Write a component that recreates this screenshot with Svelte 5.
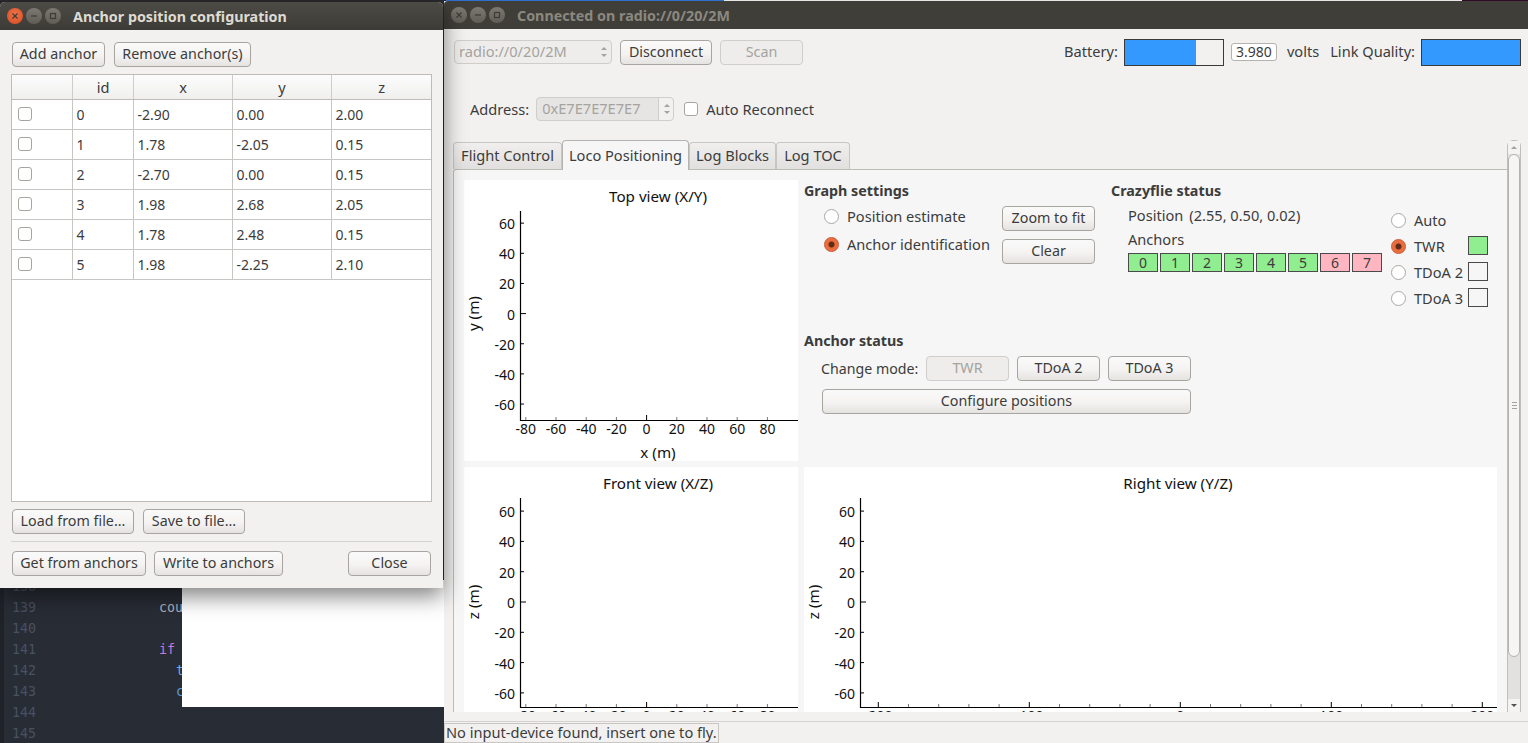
<script>
	const anchors = [
		{ id: 0, x: '-2.90', y: '0.00', z: '2.00' },
		{ id: 1, x: '1.78', y: '-2.05', z: '0.15' },
		{ id: 2, x: '-2.70', y: '0.00', z: '0.15' },
		{ id: 3, x: '1.98', y: '2.68', z: '2.05' },
		{ id: 4, x: '1.78', y: '2.48', z: '0.15' },
		{ id: 5, x: '1.98', y: '-2.25', z: '2.10' }
	];
	const anchorStates = [1, 1, 1, 1, 1, 1, 0, 0];
	const lineNumbers = [138, 139, 140, 141, 142, 143, 144, 145];
	const yValues = [60, 40, 20, 0, -20, -40, -60];
	const xValues = [-80, -60, -40, -20, 0, 20, 40, 60, 80];
	const wideMinor = [];
	for (let v = -200; v <= 200; v += 20) wideMinor.push(v);
</script>

{#snippet plot(title, xLabel, yLabel, width, height, y0, yStep, x0, xStep, xTicks, labelled, titleX)}
	<svg class="plot" viewBox="0 0 {width} {height}" preserveAspectRatio="xMinYMin">
		<text class="label" x={titleX} y="22" text-anchor="middle">{title}</text>
		<line class="axis" x1="56.5" y1="31" x2="56.5" y2="241" />
		<line class="axis" x1="56" y1="240.5" x2={width} y2="240.5" />
		{#each yValues as v}
			<line class="axis thin" x1="57" x2={v === 0 ? 62 : 60} y1={y0 - v * yStep} y2={y0 - v * yStep} />
			<text class="tick" x="51" y={y0 - v * yStep + 6} text-anchor="end">{v}</text>
		{/each}
		{#each xTicks as v}
			<line class="axis thin" class:minor={!labelled.includes(v) || (labelled.length === 9 && v !== 0)} x1={x0 + v * xStep} x2={x0 + v * xStep} y1="240" y2={labelled.includes(v) && (v === 0 || labelled.length < 9) ? 235 : 237} />
		{/each}
		{#each labelled as v}
			<text class="tick" x={x0 + v * xStep} y="254" text-anchor="middle">{v}</text>
		{/each}
		{#if xLabel}
			<text class="label" x={titleX} y="278" text-anchor="middle">{xLabel}</text>
		{/if}
		<text class="label" transform="translate(15 {y0}) rotate(-90)" text-anchor="middle">{yLabel}</text>
	</svg>
{/snippet}

<div class="desktop">
	<div class="top-strip">
		<span class="strip-dark"></span>
		<span class="strip-blue"></span>
		<span class="strip-light"></span>
		<span class="strip-plum"></span>
	</div>

	<div class="editor">
		{#each lineNumbers as n}
			<div class="code-line"><span class="num">{n}</span></div>
		{/each}
		<span class="code code-a">cou</span>
		<span class="code code-b">if</span>
		<span class="code code-c">t</span>
		<span class="code code-d">c</span>
	</div>
	<div class="white-sheet"></div>

	<section class="window main-window">
		<header class="titlebar inactive">
			<div class="controls">
				<span class="dot"><svg width="8" height="8" viewBox="0 0 8 8"><path d="M1.5 1.5l5 5M6.5 1.5l-5 5" /></svg></span>
				<span class="dot"><svg width="8" height="8" viewBox="0 0 8 8"><path d="M1 4h6" /></svg></span>
				<span class="dot"><svg width="8" height="8" viewBox="0 0 8 8"><rect x="1.5" y="1.5" width="5" height="5" /></svg></span>
			</div>
			<h1>Connected on radio://0/20/2M</h1>
		</header>

		<div class="main-body">
			<div class="connect-row">
				<div class="combo">radio://0/20/2M<span class="spin-arrows"><i class="up"></i><i class="down"></i></span></div>
				<button class="w92">Disconnect</button>
				<button class="w83" disabled>Scan</button>
				<div class="grow"></div>
				<span class="battery-label">Battery:</span>
				<div class="bar"><div class="bar-fill" style="width: 73%"></div></div>
				<span class="volt-box">3.980</span>
				<span class="volts">volts</span>
				<span class="link-label">Link Quality:</span>
				<div class="bar"><div class="bar-fill" style="width: 100%"></div></div>
			</div>

			<div class="address-row">
				<span>Address:</span>
				<div class="address-box">
					<span class="address-value">0xE7E7E7E7E7</span>
					<span class="address-spin"><i class="up"></i><i class="down"></i></span>
				</div>
				<input type="checkbox" class="check" />
				<span>Auto Reconnect</span>
			</div>

			<div class="tabs">
				<div class="tab t1">Flight Control</div>
				<div class="tab t2 active">Loco Positioning</div>
				<div class="tab t3">Log Blocks</div>
				<div class="tab t4">Log TOC</div>
			</div>

			<div class="scroll-area">
				<div class="pane">
					<div class="pane-grid">
						<div class="plot-cell">
							{@render plot('Top view (X/Y)', 'x (m)', 'y (m)', 334, 281, 133.6, 1.5075, 182.6, 1.51, xValues, xValues, 194)}
						</div>

						<div class="controls-cell">
							<div class="settings-top">
								<div class="graph-settings">
									<h2>Graph settings</h2>
									<div class="settings-grid">
										<div class="radios">
											<label class="radio-row"><input type="radio" name="graph" class="radio" />Position estimate</label>
											<label class="radio-row"><input type="radio" name="graph" class="radio" checked />Anchor identification</label>
										</div>
										<div class="graph-buttons">
											<button class="w93">Zoom to fit</button>
											<button class="w93">Clear</button>
										</div>
									</div>
								</div>

								<div class="status">
									<h2>Crazyflie status</h2>
									<div class="status-body">
										<div class="status-left">
											<div class="position"><span>Position</span><span>(2.55, 0.50, 0.02)</span></div>
											<div class="anchors-label">Anchors</div>
											<div class="anchor-boxes">
												{#each anchorStates as ok, i}
													<span class="anchor-box" class:ok class:bad={!ok}>{i}</span>
												{/each}
											</div>
										</div>
										<div class="modes">
											<label class="mode"><input type="radio" name="mode" class="radio" /><span class="mode-name">Auto</span></label>
											<label class="mode"><input type="radio" name="mode" class="radio" checked /><span class="mode-name">TWR</span><span class="mode-led ok"></span></label>
											<label class="mode"><input type="radio" name="mode" class="radio" /><span class="mode-name">TDoA 2</span><span class="mode-led"></span></label>
											<label class="mode"><input type="radio" name="mode" class="radio" /><span class="mode-name">TDoA 3</span><span class="mode-led"></span></label>
										</div>
									</div>
								</div>
							</div>

							<div class="anchor-status">
								<h2>Anchor status</h2>
								<div class="change-mode">
									<span class="change-label">Change mode:</span>
									<button class="w83" disabled>TWR</button>
									<button class="w83">TDoA 2</button>
									<button class="w83">TDoA 3</button>
								</div>
								<button class="configure">Configure positions</button>
							</div>
						</div>

						<div class="plot-cell">
							{@render plot('Front view (X/Z)', '', 'z (m)', 334, 245, 135, 1.515, 182.6, 1.51, xValues, xValues, 194)}
						</div>
						<div class="plot-cell">
							{@render plot('Right view (Y/Z)', '', 'z (m)', 693, 245, 135, 1.515, 376.3, 1.51, wideMinor, [-200, -100, 0, 100, 200], 374)}
						</div>
					</div>
				</div>

				<div class="scrollbar">
					<div class="sb-arrow"><i class="up"></i></div>
					<div class="sb-slider"><span class="grip"></span></div>
					<div class="sb-trough"></div>
					<div class="sb-arrow"><i class="down dark"></i></div>
				</div>
			</div>

			<div class="grow"></div>
			<footer class="statusbar">
				<span class="status-msg">No input-device found, insert one to fly.</span>
			</footer>
		</div>
	</section>

	<section class="window dialog">
		<header class="titlebar">
			<div class="controls">
				<span class="dot close"><svg width="8" height="8" viewBox="0 0 8 8"><path d="M1.5 1.5l5 5M6.5 1.5l-5 5" /></svg></span>
				<span class="dot"><svg width="8" height="8" viewBox="0 0 8 8"><path d="M1 4h6" /></svg></span>
				<span class="dot"><svg width="8" height="8" viewBox="0 0 8 8"><rect x="1.5" y="1.5" width="5" height="5" /></svg></span>
			</div>
			<h1>Anchor position configuration</h1>
		</header>

		<div class="dialog-body">
			<div class="btn-row">
				<button class="add">Add anchor</button>
				<button class="remove">Remove anchor(s)</button>
			</div>

			<div class="table-wrap">
				<table>
					<colgroup>
						<col class="col-check" />
						<col class="col-id" />
						<col class="col-num" />
						<col class="col-num" />
						<col />
					</colgroup>
					<thead>
						<tr><th></th><th>id</th><th>x</th><th>y</th><th>z</th></tr>
					</thead>
					<tbody>
						{#each anchors as a}
							<tr>
								<td class="check-cell"><input type="checkbox" class="check" /></td>
								<td>{a.id}</td>
								<td>{a.x}</td>
								<td>{a.y}</td>
								<td>{a.z}</td>
							</tr>
						{/each}
					</tbody>
				</table>
			</div>

			<div class="btn-row file-row">
				<button class="load">Load from file...</button>
				<button class="save">Save to file...</button>
			</div>
			<hr />
			<div class="btn-row last-row">
				<button class="get">Get from anchors</button>
				<button class="write">Write to anchors</button>
				<div class="grow"></div>
				<button class="w83">Close</button>
			</div>
		</div>
	</section>
</div>

<style>
	:global(body) {
		margin: 0;
		overflow: hidden;
	}

	.desktop {
		position: relative;
		width: 1528px;
		height: 743px;
		overflow: hidden;
		background: #282c34;
		font-family: "Noto Sans", "Open Sans", sans-serif;
		font-size: 14.6px;
		color: #3c3c3c;
	}

	.top-strip {
		position: absolute;
		top: 0;
		left: 0;
		right: 0;
		height: 3px;
		display: flex;
	}
	.strip-dark { width: 446px; background: #2a2a2e; }
	.strip-blue { width: 278px; background: #2f6fd0; }
	.strip-light { flex: 1; background: #e6e6e6; }
	.strip-plum { width: 66px; background: #300a24; }

	.editor {
		position: absolute;
		left: 0;
		top: 574px;
		width: 444px;
		height: 169px;
		padding: 0 0 0 4px;
		box-sizing: border-box;
		font-family: "DejaVu Sans Mono", monospace;
		font-size: 13.3px;
		border-left: 4px solid #1f2228;
	}
	.code-line {
		height: 21px;
		line-height: 21px;
		position: relative;
		top: 2px;
	}
	.num { color: #495162; padding-left: 4px; }
	.code { position: absolute; }
	.code-a { left: 155px; top: 26px; color: #abb2bf; }
	.code-b { left: 155px; top: 68px; color: #c678dd; }
	.code-c { left: 172px; top: 89px; color: #61afef; }
	.code-d { left: 172px; top: 110px; color: #5d9bd0; }

	.white-sheet {
		position: absolute;
		left: 182px;
		top: 580px;
		width: 262px;
		height: 127px;
		background: #fff;
	}

	.window {
		position: absolute;
		display: flex;
		flex-direction: column;
		background: #f2f1f0;
	}
	.main-window {
		left: 444px;
		top: 1px;
		width: 1084px;
		height: 742px;
	}
	.dialog {
		left: 0;
		top: 2px;
		width: 443px;
		height: 586px;
		box-shadow: 0 8px 22px rgba(0, 0, 0, 0.5);
		border-radius: 5px 5px 0 0;
	}

	.titlebar {
		flex: none;
		height: 28px;
		display: flex;
		align-items: center;
		background: linear-gradient(#4d4b45, #3c3b37);
		border-radius: 5px 5px 0 0;
		color: #dfdbd2;
	}
	.titlebar.inactive {
		background: #3f3e39;
		color: #8b8880;
		border-radius: 4px 0 0 0;
	}
	.titlebar h1 {
		margin: 0 0 0 12px;
		font-size: 14.3px;
		font-weight: 700;
	}
	.controls {
		display: flex;
		gap: 3px;
		padding-left: 7px;
	}
	.dot {
		width: 16px;
		height: 16px;
		border-radius: 50%;
		background: linear-gradient(#7b7971, #5f5d56);
		display: flex;
		align-items: center;
		justify-content: center;
	}
	.dot.close {
		background: radial-gradient(circle at 50% 40%, #f0764a, #d4481f);
	}
	.dot svg { display: block; }
	.dot path,
	.dot rect {
		fill: none;
		stroke: #3c3b37;
		stroke-width: 1.2;
	}

	button {
		flex: none;
		height: 25px;
		padding: 0 0 1px;
		box-sizing: border-box;
		border: 1px solid #a8a5a0;
		border-radius: 4px;
		background: linear-gradient(#fbfafa, #f4f3f2 55%, #e5e3e0);
		font: inherit;
		font-size: 14.3px;
		color: #3c3c3c;
		line-height: 20px;
	}
	button:disabled {
		background: #eeedeb;
		border-color: #d0cecb;
		color: #a5a3a0;
	}
	.w83 { width: 83px; }
	.w92 { width: 92px; }
	.w93 { width: 93px; }
	.add { width: 93px; }
	.remove { width: 137px; }
	.load { width: 122px; }
	.save { width: 102px; }
	.get { width: 134px; }
	.write { width: 129px; }
	.grow { flex: 1; }

	.check {
		appearance: none;
		display: block;
		margin: 0;
		width: 14px;
		height: 14px;
		box-sizing: border-box;
		background: #fff;
		border: 1px solid #a8a5a0;
		border-radius: 3px;
	}

	.radio {
		appearance: none;
		flex: none;
		margin: 0;
		width: 15px;
		height: 15px;
		box-sizing: border-box;
		background: #fff;
		border: 1px solid #aaa8a4;
		border-radius: 50%;
	}
	.radio:checked {
		background: radial-gradient(circle, #5b2c18 0 2.6px, #e8683a 3.4px, #ee7a4c 100%);
		border-color: #c9552c;
	}

	/* dialog */
	.dialog-body {
		flex: 1;
		display: flex;
		flex-direction: column;
		padding: 12px 11px 0;
	}
	.btn-row {
		display: flex;
		gap: 9px;
		padding-left: 1px;
	}
	.last-row {
		gap: 8px;
		padding-right: 1px;
	}
	.table-wrap {
		margin-top: 7px;
		height: 428px;
		box-sizing: border-box;
		border: 1px solid #bebcb8;
		background: #fff;
	}
	table {
		width: 100%;
		table-layout: fixed;
		border-collapse: collapse;
		font-size: 14px;
	}
	.col-check { width: 60px; }
	.col-id { width: 61px; }
	.col-num { width: 99px; }
	th {
		height: 24px;
		padding: 0 0 0 1px;
		font-weight: 400;
		font-size: 14.6px;
		background: linear-gradient(#fcfcfc, #f0efee);
		border-right: 1px solid #cfcdca;
		border-bottom: 1px solid #bebcb8;
	}
	td {
		height: 29px;
		padding: 0 0 0 4px;
		border-right: 1px solid #c8c6c3;
		border-bottom: 1px solid #c8c6c3;
	}
	th:last-child,
	td:last-child { border-right: none; }
	.check-cell { padding-left: 6px; }
	.check-cell .check { margin-top: -2px; }
	.file-row { margin-top: 7px; }
	hr {
		width: 100%;
		margin: 7px 0 9px;
		border: none;
		border-top: 1px solid #d4d2cf;
	}

	/* main window */
	.main-body {
		flex: 1;
		min-height: 0;
		display: flex;
		flex-direction: column;
	}
	.connect-row {
		display: flex;
		align-items: center;
		gap: 8px;
		height: 24px;
		margin-top: 11px;
		padding: 0 7px 0 10px;
	}
	.combo {
		flex: none;
		position: relative;
		width: 158px;
		height: 24px;
		box-sizing: border-box;
		padding-left: 4px;
		line-height: 20px;
		border: 1px solid #d0cecb;
		border-radius: 4px;
		background: #eeedeb;
		color: #a5a3a0;
	}
	.spin-arrows {
		position: absolute;
		right: 4px;
		top: 6px;
	}
	.up,
	.down {
		display: block;
		width: 0;
		height: 0;
		border-left: 3px solid transparent;
		border-right: 3px solid transparent;
	}
	.up { border-bottom: 3px solid #a5a3a0; margin-bottom: 4px; }
	.down { border-top: 3px solid #a5a3a0; }
	.down.dark { border-top-color: #55534f; }

	.battery-label,
	.volts,
	.link-label { padding-bottom: 2px; }
	.battery-label { margin-right: -2px; }
	.bar {
		flex: none;
		width: 100px;
		height: 27px;
		box-sizing: border-box;
		border: 1px solid #3a3a3a;
		background: #f2f1f0;
	}
	.bar-fill {
		height: 100%;
		background: #3399ff;
	}
	.volt-box {
		flex: none;
		width: 46px;
		height: 18px;
		box-sizing: border-box;
		border: 1px solid #b5b3af;
		border-radius: 3px;
		background: #fff;
		font-size: 14px;
		line-height: 16px;
		text-align: center;
		margin-left: -1px;
	}
	.volts { margin-left: 2px; }
	.link-label { margin-left: 3px; margin-right: -2px; }

	.address-row {
		display: flex;
		align-items: center;
		height: 24px;
		margin-top: 33px;
		padding-left: 26px;
	}
	.address-box {
		display: flex;
		width: 138px;
		height: 24px;
		margin: 0 10px 0 7px;
		box-sizing: border-box;
		border: 1px solid #d0cecb;
		border-radius: 4px;
		background: #e6e5e3;
		color: #a5a3a0;
		line-height: 21px;
	}
	.address-value { flex: 1; padding-left: 5px; }
	.address-spin {
		width: 15px;
		padding: 6px 0 0 5px;
		box-sizing: border-box;
		background: #f2f1f0;
		border-left: 1px solid #d0cecb;
		border-radius: 0 4px 4px 0;
	}
	.address-row .check { margin-right: 8px; }

	.tabs {
		display: flex;
		align-items: flex-end;
		height: 30px;
		margin-top: 18px;
		padding-left: 9px;
	}
	.tab {
		height: 27px;
		box-sizing: border-box;
		line-height: 25px;
		text-align: center;
		background: linear-gradient(#f0efee, #e2e0de);
		border: 1px solid #c8c6c3;
		border-bottom: none;
		border-radius: 4px 4px 0 0;
	}
	.tab.active {
		height: 30px;
		line-height: 28px;
		background: #f6f6f6;
		border-color: #b5b3af;
		position: relative;
		z-index: 1;
		margin-bottom: -1px;
	}
	.t1 { width: 109px; }
	.t2 { width: 127px; }
	.t3 { width: 87px; }
	.t4 { width: 74px; }

	.scroll-area {
		display: flex;
		height: 572px;
		margin-top: -29px;
		padding-left: 9px;
	}
	.pane {
		width: 1054px;
		margin-top: 29px;
		box-sizing: border-box;
		padding: 10px 0 0 10px;
		overflow: hidden;
		background: #f6f6f6;
		border: 1px solid #bebcb8;
		border-bottom: none;
		border-right: none;
		border-radius: 3px 0 0 0;
	}
	.pane-grid {
		display: grid;
		grid-template-columns: 334px 693px;
		grid-template-rows: 281px 245px;
		gap: 6px;
	}
	.plot-cell {
		background: #fff;
		overflow: hidden;
	}
	.plot {
		display: block;
		width: 100%;
		height: 100%;
		overflow: hidden;
	}
	.axis {
		stroke: #000;
		stroke-width: 1.2;
	}
	.thin { stroke-width: 1; }
	.minor { stroke: #777; }
	.tick {
		font-size: 14px;
		fill: #111;
	}
	.label {
		font-size: 15.2px;
		fill: #111;
	}

	.controls-cell {
		display: flex;
		flex-direction: column;
	}
	.settings-top {
		display: flex;
		height: 152px;
		padding-top: 2px;
		box-sizing: border-box;
	}
	h2 {
		margin: 0;
		font-size: 14.3px;
		font-weight: 700;
		line-height: 18px;
	}
	.graph-settings { width: 307px; }
	.settings-grid {
		display: flex;
		padding-left: 20px;
	}
	.radios {
		width: 178px;
		display: flex;
		flex-direction: column;
		gap: 8px;
		padding-top: 6px;
	}
	.radio-row {
		display: flex;
		align-items: center;
		gap: 8px;
		height: 20px;
	}
	.graph-buttons {
		display: flex;
		flex-direction: column;
		gap: 8px;
		padding-top: 6px;
	}
	.status { flex: 1; }
	.status-body {
		display: flex;
		padding-left: 17px;
	}
	.status-left {
		width: 263px;
		padding-top: 5px;
	}
	.position {
		display: flex;
		gap: 6px;
		height: 20px;
		line-height: 20px;
	}
	.anchors-label {
		margin-top: 4px;
		height: 20px;
		line-height: 20px;
	}
	.anchor-boxes {
		display: flex;
		gap: 2px;
		margin-top: 4px;
	}
	.anchor-box {
		width: 30px;
		height: 19px;
		box-sizing: border-box;
		border: 1px solid #4a4a4a;
		font-size: 14px;
		line-height: 17px;
		text-align: center;
	}
	.ok { background: #90ee90; }
	.bad { background: #ffb6c1; }
	.modes {
		display: flex;
		flex-direction: column;
		padding-top: 7px;
	}
	.mode {
		display: flex;
		align-items: center;
		height: 26px;
	}
	.mode-name {
		width: 54px;
		margin-left: 8px;
	}
	.mode-led {
		width: 20px;
		height: 19px;
		margin-bottom: 1px;
		box-sizing: border-box;
		border: 1px solid #4a4a4a;
	}

	.change-mode {
		display: flex;
		align-items: center;
		gap: 8px;
		margin-top: 6px;
		padding-left: 17px;
	}
	.change-label {
		flex: none;
		width: 97px;
		font-size: 14.2px;
		white-space: nowrap;
	}
	.configure {
		display: block;
		width: 369px;
		margin: 8px 0 0 18px;
	}

	.scrollbar {
		width: 14px;
		display: flex;
		flex-direction: column;
		box-sizing: border-box;
		background: #e2e1df;
		border: 1px solid #c0bebb;
		border-bottom: none;
		border-radius: 6px 6px 0 0;
	}
	.sb-arrow {
		flex: none;
		height: 13px;
		display: flex;
		align-items: center;
		justify-content: center;
		background: #f4f3f2;
	}
	.sb-arrow .up { margin: 0; }
	.sb-slider {
		height: 503px;
		flex: none;
		display: flex;
		align-items: center;
		justify-content: center;
		box-sizing: border-box;
		background: #f6f5f4;
		border: 1px solid #b5b3af;
		border-radius: 6px;
	}
	.grip {
		width: 5px;
		height: 7px;
		background: repeating-linear-gradient(#a5a3a0 0 1px, transparent 1px 3px);
	}
	.sb-trough { flex: 1; }

	.statusbar {
		flex: none;
		height: 22px;
		box-sizing: border-box;
		border-top: 1px solid #d4d2cf;
	}
	.status-msg {
		display: inline-block;
		box-sizing: border-box;
		height: 20px;
		line-height: 17px;
		padding: 0 1px;
		border: 1px solid #c8c6c3;
	}
</style>
